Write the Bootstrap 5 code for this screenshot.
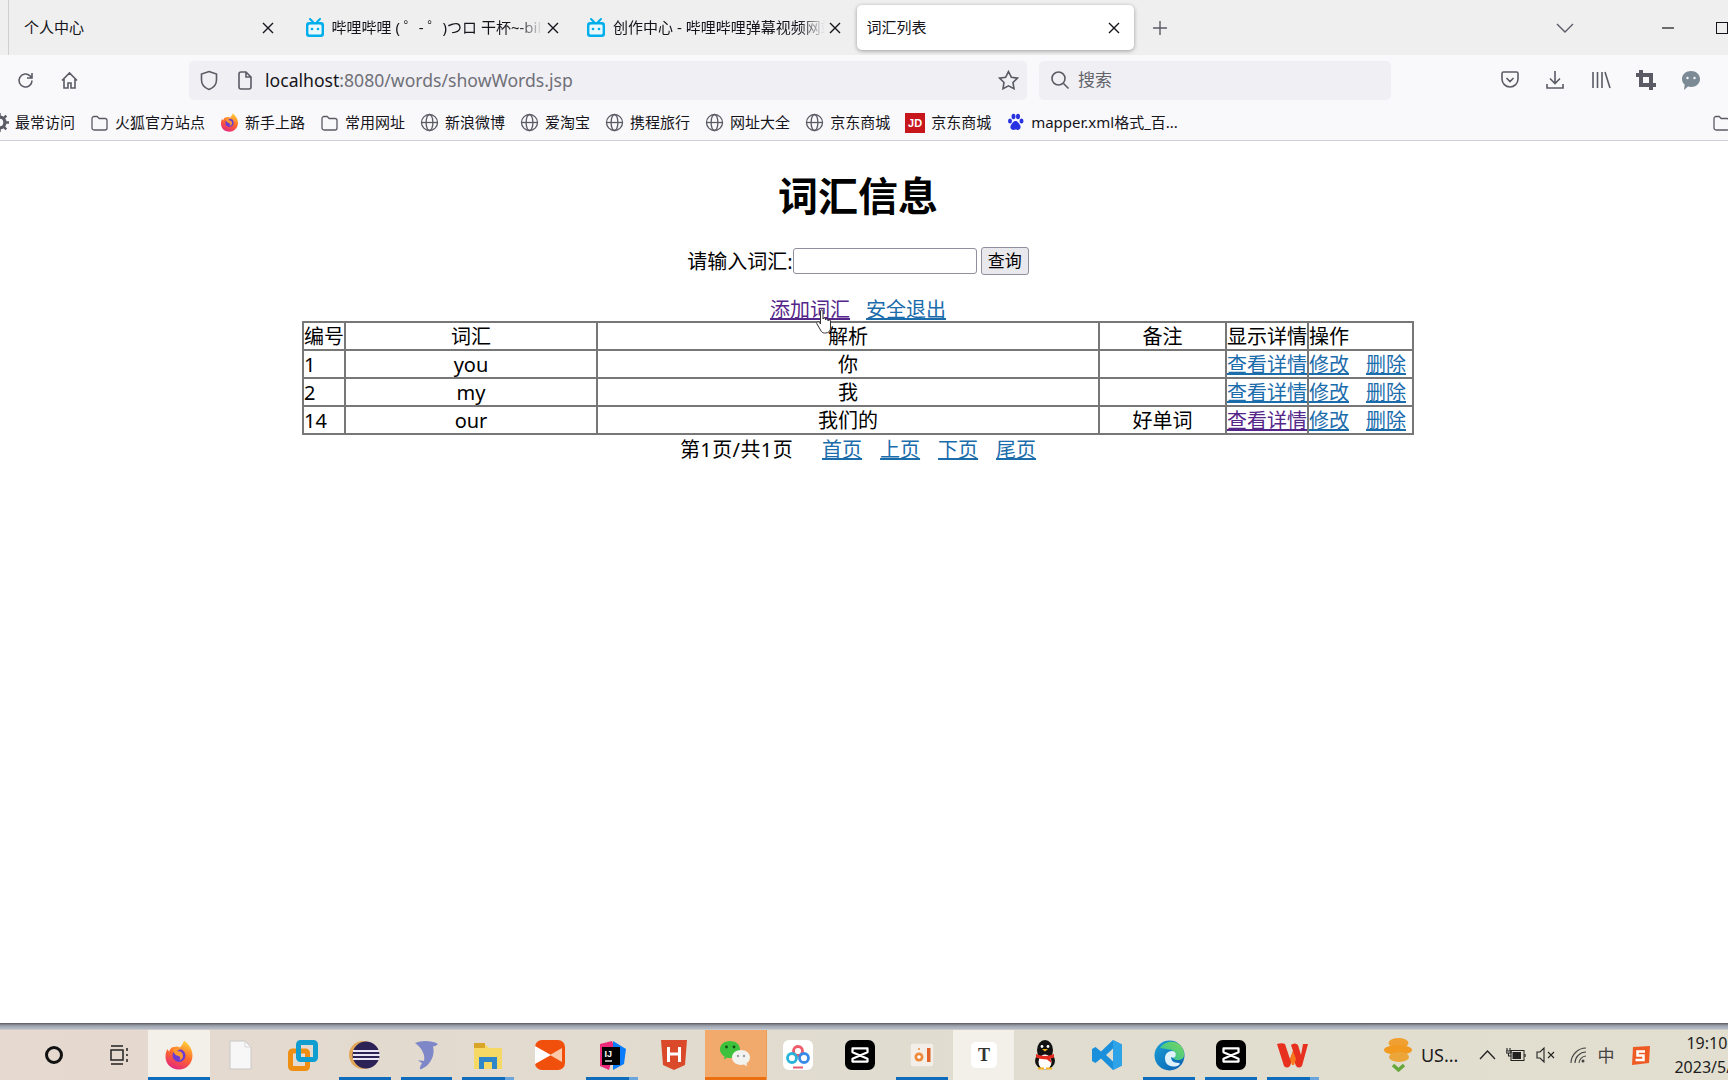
<!DOCTYPE html>
<html lang="zh-CN">
<head>
<meta charset="UTF-8">
<title>词汇列表</title>
<link href="https://cdn.jsdelivr.net/npm/bootstrap@5.3.0/dist/css/bootstrap.min.css" rel="stylesheet">
<style>
    html, body { height: 100%; }
    body { font-family: "Noto Sans", "Noto Sans CJK SC", sans-serif; color: #000; overflow: hidden; background: #fff; }
    .screen { height: 1080px; width: 1728px; overflow: hidden; }

    /* browser tabs */
    .tabstrip { height: 55px; background: #efeff0; padding-left: 8px; font-size: 15px; color: #15141a; }
    .tab-item { width: 281.5px; height: 45px; padding: 0 12px 0 15px; flex: none; }
    .tab-first { border-left: 1px solid #cfcfd4; height: 55px; }
    .tab-active { background: #fff; border-radius: 5px; box-shadow: 0 1px 4px rgba(0,0,0,.35); width: 277px; margin-left: 4px; padding-left: 10px; padding-right: 14px; }
    .tab-title { white-space: nowrap; overflow: hidden; flex: 1; min-width: 0; -webkit-mask-image: linear-gradient(to right, #000 88%, transparent); mask-image: linear-gradient(to right, #000 88%, transparent); }
    .tab-active .tab-title, .tab-first .tab-title { -webkit-mask-image: none; mask-image: none; }
    .tab-close { width: 12px; height: 12px; flex: none; }
    .tab-fav { width: 20px; height: 20px; flex: none; margin-right: 7px; }
    .strip-btn { flex: none; }
    .gap-plus { margin-left: 18px; }
    .gap-chevron { margin-left: 388px; }
    .gap-min { margin-left: 88px; }
    .gap-max { margin-left: 42px; }

    /* toolbar */
    .toolbar { height: 50px; background: #f9f9fb; position: relative; }
    .tool-svg { flex: none; fill: none; stroke: #5b5b66; stroke-width: 1.6; }
    .gap-reload { margin-left: 16px; }
    .gap-home { margin-left: 25px; }
    .urlbar { width: 838px; height: 39px; margin-left: 110px; background: #f0f0f4; border-radius: 5px; padding: 0 8px 0 10px; font-size: 17.6px; color: #15141a; flex: none; }
    .urlbar .dim { color: #6f6f78; }
    .url-doc { margin-left: 18px; }
    .url-text { margin-left: 13px; }
    .searchbar { width: 352px; height: 39px; margin-left: 12px; background: #f0f0f4; border-radius: 5px; padding-left: 11px; font-size: 17px; color: #63636b; flex: none; }
    .toolgroup { margin-left: 109px; gap: 25px; }
    .solid-ico { flex: none; }

    /* bookmarks */
    .bookmarks { height: 36px; background: #f9f9fb; border-bottom: 1px solid #cfcfd8; font-size: 15px; color: #15141a; white-space: nowrap; padding-left: 0; }
    .mark-row { gap: 15px; margin-left: -10px; }
    .mark-link { gap: 6px; flex: none; }
    .mark-ico { width: 19px; height: 19px; flex: none; }
    .jd-tile { width: 20px; height: 20px; background: #c8161d; color: #fff; font: bold 11px/20px "Liberation Sans", sans-serif; text-align: center; flex: none; }
    .folder-end { margin-right: -3px; }

    /* page */
    .word-page { height: 882px; width: 1716px; padding-top: 30px; font-size: 20px; position: relative; text-align: center; line-height: 27px; }
    .word-page h1 { font-size: 40px; font-weight: 700; margin: 0; line-height: 50px; }
    .search-line { margin-top: 25px; height: 30px; }
    .word-input { width: 184px; height: 26px; border: 1px solid #8f8f9d; border-radius: 3px; background: #fff; padding: 0 3px; }
    .word-btn { width: 48px; height: 28px; margin-left: 4px; border: 1px solid #8f8f9d; border-radius: 3px; background: #e9e9ed; font-size: 17px; line-height: 24px; padding: 0; color: #000; }
    .link-line { margin-top: 20px; height: 25px; line-height: 27px; }
    .word-page a { color: #1b6cab; text-decoration: underline; }
    .word-page a.seen { color: #55268a; }
    .word-table { width: 1110px; margin: 0 auto; border-collapse: collapse; table-layout: fixed; font-size: 20px; }
    .word-table td { border: 2px solid #777; padding: 2px 0 0; height: 28px; line-height: 24px; white-space: nowrap; overflow: hidden; }
    .word-table td.al { text-align: left; }
    .w-a { width: 42px; } .w-b { width: 252px; } .w-c { width: 502px; } .w-d { width: 127px; } .w-e { width: 82px; } .w-f { width: 105px; }
    .pager { line-height: 30px; height: 28px; gap: 18px; }
    .pager-info { letter-spacing: .4px; margin-right: 11px; }
    .mod-del { gap: 17px; }
    .hand-cursor { position: absolute; left: 815px; top: 168px; width: 21px; height: 26px; }

    /* taskbar */
    .taskbar { height: 57px; background: linear-gradient(to bottom, #55585c 0, #8d9198 2px, #a9b1bf 4px, #b4b9c2 6px, transparent 7px), linear-gradient(to right, #e6d9cf, #e0dccf 50%, #e2dfd0); padding-top: 7px; position: relative; }
    .task-slot { width: 61.9px; height: 50px; flex: none; position: relative; }
    .task-open::after { content: ""; position: absolute; left: 5px; right: 5px; bottom: 0; height: 3px; background: #0f6cbd; }
    .task-multi::after { background: linear-gradient(to right, #0f6cbd 82%, #6aa6db 82%); }
    .task-lit { background: #f3f0ea; }
    .task-lit.task-open::after { left: 0; right: 0; }
    .task-wechat { background: #f2a96c; border-right: 1px solid #ee9a52; }
    .task-wechat::after { content: ""; position: absolute; left: 0; right: 0; bottom: 0; height: 3px; background: #ea6f10; }
    .task-sys { width: 59px; height: 50px; flex: none; }
    .sys-first { margin-left: 24px; }
    .sys-second { margin-left: 6px; }
    .tray { margin-left: 60px; font-size: 18px; color: #1d1d1d; white-space: nowrap; height: 50px; }
    .tray-up { margin-left: 21px; }
    .tray-bat { margin-left: 10px; }
    .tray-spk { margin-left: 10px; }
    .tray-wifi { margin-left: 13px; }
    .tray-ime { margin-left: 10px; font-size: 17px; color: #444; font-family: "Noto Sans CJK SC", sans-serif; }
    .tray-sogou { margin-left: 16px; }
    .clock { font-size: 16px; line-height: 24px; text-align: left; margin-left: 23px; width: 80px; flex: none; }
    .clock-time { padding-left: 12px; }
</style>
</head>
<body>
<svg width="0" height="0" class="position-absolute">
    <symbol id="ico-x" viewBox="0 0 12 12"><path d="M1 1l10 10M11 1L1 11" stroke="#15141a" stroke-width="1.4" fill="none"/></symbol>
    <symbol id="ico-bili" viewBox="0 0 20 20"><path d="M5 1l3 3M15 1l-3 3" stroke="#00aeec" stroke-width="2" stroke-linecap="round"/><rect x="1" y="4" width="18" height="15" rx="3" fill="#00aeec"/><rect x="3.4" y="6.5" width="13.2" height="10" rx="1.5" fill="#e8f8fd"/><circle cx="7" cy="11" r="1.3" fill="#00aeec"/><circle cx="13" cy="11" r="1.3" fill="#00aeec"/></symbol>
    <symbol id="ico-folder" viewBox="0 0 19 19"><path d="M2 5.5a2 2 0 0 1 2-2h3.2l2 2H15a2 2 0 0 1 2 2V15a2 2 0 0 1-2 2H4a2 2 0 0 1-2-2z" fill="none" stroke="#5b5b66" stroke-width="1.3"/></symbol>
    <symbol id="ico-globe" viewBox="0 0 19 19"><g fill="none" stroke="#5b5b66" stroke-width="1.3"><circle cx="9.5" cy="9.5" r="8"/><ellipse cx="9.5" cy="9.5" rx="3.4" ry="8"/><path d="M1.5 9.5h16"/></g></symbol>
    <symbol id="ico-ff" viewBox="0 0 30 30">
        <defs><linearGradient id="ffg" x1="0.7" y1="0" x2="0.3" y2="1"><stop offset="0" stop-color="#ffd23a"/><stop offset=".5" stop-color="#ff6a2b"/><stop offset="1" stop-color="#e4257f"/></linearGradient></defs>
        <path d="M15 29.500C7 29.500 1.500 24 1.500 16.500c0-3 .8-5.500 2-7.500.3 1.200 1 2 1.800 2.500C6 8 8.500 6.500 10 7c2.500-1 4.500-.5 6 .5C18 5 19.500 3 20 .5c5 3.500 8.500 9 8.500 15 0 8-6 14-13.500 14z" fill="url(#ffg)"/>
        <circle cx="15" cy="15.500" r="6.500" fill="#6d3bd1"/>
        <path d="M9 10c3-2.500 6-2 7.500-.5-2 0-3 .8-3.300 2 1.800-.6 5.800.3 5.800 4.500 0 2-1.500 4-4 4.500 2-1.500 1.500-4-.5-4.500-2-.3-4-1-5.500-6z" fill="#ff9a2e"/>
    </symbol>
    <symbol id="ico-capcut" viewBox="0 0 32 32"><rect width="32" height="32" rx="7" fill="#000"/><path d="M8 9h16v4L8 20v3h16v-3L8 13z" fill="none" stroke="#fff" stroke-width="2.400" stroke-linejoin="round"/></symbol>
</svg>

<div class="screen d-flex flex-column">

    <!-- tabs -->
    <div class="tabstrip d-flex align-items-center">
        <div class="tab-item tab-first d-flex align-items-center"><span class="tab-title">个人中心</span><svg class="tab-close me-1"><use href="#ico-x"/></svg></div>
        <div class="tab-item d-flex align-items-center"><svg class="tab-fav"><use href="#ico-bili"/></svg><span class="tab-title">哔哩哔哩 ( ゜- ゜)つロ 干杯~-bilibili</span><svg class="tab-close ms-1"><use href="#ico-x"/></svg></div>
        <div class="tab-item d-flex align-items-center"><svg class="tab-fav"><use href="#ico-bili"/></svg><span class="tab-title">创作中心 - 哔哩哔哩弹幕视频网站</span><svg class="tab-close ms-1"><use href="#ico-x"/></svg></div>
        <div class="tab-item tab-active d-flex align-items-center"><span class="tab-title">词汇列表</span><svg class="tab-close"><use href="#ico-x"/></svg></div>
        <svg class="strip-btn gap-plus" width="16" height="16" viewBox="0 0 16 16"><path d="M8 1v14M1 8h14" stroke="#5b5b66" stroke-width="1.400"/></svg>
        <svg class="strip-btn gap-chevron" width="18" height="10" viewBox="0 0 18 10"><path d="M1 1l8 8 8-8" fill="none" stroke="#5b5b66" stroke-width="1.400"/></svg>
        <svg class="strip-btn gap-min" width="12" height="2" viewBox="0 0 12 2"><path d="M0 1h12" stroke="#15141a" stroke-width="1.200"/></svg>
        <svg class="strip-btn gap-max" width="12" height="12" viewBox="0 0 12 12"><rect x=".5" y=".5" width="11" height="11" fill="none" stroke="#15141a"/></svg>
    </div>

    <!-- toolbar -->
    <div class="toolbar d-flex align-items-center">
        <svg class="tool-svg gap-reload" width="19" height="19" viewBox="0 0 19 19"><path d="M16 9.500a6.500 6.500 0 1 1-2-4.700L16 7M16 2v5h-5"/></svg>
        <svg class="tool-svg gap-home" width="19" height="19" viewBox="0 0 19 19"><path d="M2 9.500L9.500 2 17 9.500M4 8v9h4v-5h3v5h4V8"/></svg>
        <div class="urlbar d-flex align-items-center">
            <svg class="tool-svg" width="20" height="21" viewBox="0 0 20 21"><path d="M10 1.500l7.500 2.500v6c0 5-3.500 8-7.500 9.500-4-1.500-7.500-4.500-7.500-9.500V4z"/></svg>
            <svg class="tool-svg url-doc" width="15" height="19" viewBox="0 0 15 19"><path d="M2 3a2 2 0 0 1 2-2h5l5 5v10a2 2 0 0 1-2 2H4a2 2 0 0 1-2-2zM9 1v5h5"/></svg>
            <span class="url-text flex-grow-1">localhost<span class="dim">:8080/words/showWords.jsp</span></span>
            <svg class="tool-svg" width="21" height="20" viewBox="0 0 21 20"><path d="M10.500 1.500l2.800 5.700 6.200.9-4.500 4.400 1 6.200-5.500-2.900-5.500 2.900 1-6.200L1.500 8.100l6.200-.9z"/></svg>
        </div>
        <div class="searchbar d-flex align-items-center">
            <svg class="tool-svg" width="20" height="20" viewBox="0 0 20 20"><circle cx="8.500" cy="8.500" r="6.500"/><path d="M13.500 13.500l5 5"/></svg>
            <span class="ms-2">搜索</span>
        </div>
        <div class="toolgroup d-flex align-items-center">
            <svg class="tool-svg" width="20" height="20" viewBox="0 0 20 20"><path d="M2 3.500a1.500 1.500 0 0 1 1.500-1.500h13A1.500 1.500 0 0 1 18 3.500V9a8 8 0 0 1-16 0zM6.500 8l3.500 3.500L13.500 8"/></svg>
            <svg class="tool-svg" width="20" height="20" viewBox="0 0 20 20"><path d="M10 1v12M5 8.500l5 5 5-5M2 14v4h16v-4"/></svg>
            <svg class="tool-svg" width="21" height="20" viewBox="0 0 21 20"><path d="M3 2v16M7.500 2v16M12 2v16M15 2l5 16"/></svg>
            <svg class="solid-ico" width="20" height="20" viewBox="0 0 20 20"><path d="M5 0v15h15M0 5h15v15" fill="none" stroke="#5b5b66" stroke-width="4"/></svg>
            <svg class="solid-ico" width="20" height="21" viewBox="0 0 20 21"><path d="M10 1c5 0 9 3.500 9 8s-4 8-9 8c-1 0-2 0-3-.4L3 20l.7-5.300C2 13.300 1 11.300 1 9c0-4.500 4-8 9-8z" fill="#7c8a96"/><circle cx="6.500" cy="8" r="1.200" fill="#f9f9fb"/><circle cx="13.500" cy="8" r="1.200" fill="#f9f9fb"/></svg>
        </div>
    </div>

    <!-- bookmarks -->
    <div class="bookmarks d-flex align-items-center justify-content-between">
        <div class="mark-row d-flex align-items-center">
            <span class="mark-link d-flex align-items-center"><svg class="mark-ico" viewBox="0 0 14 14"><circle cx="7" cy="7" r="4" fill="none" stroke="#5b5b66" stroke-width="2.400"/><path d="M7 0v3M7 11v3M0 7h3M11 7h3M2 2l2 2M10 10l2 2M12 2l-2 2M4 10l-2 2" stroke="#5b5b66" stroke-width="1.800"/></svg>最常访问</span>
            <span class="mark-link d-flex align-items-center"><svg class="mark-ico"><use href="#ico-folder"/></svg>火狐官方站点</span>
            <span class="mark-link d-flex align-items-center"><svg class="mark-ico"><use href="#ico-ff"/></svg>新手上路</span>
            <span class="mark-link d-flex align-items-center"><svg class="mark-ico"><use href="#ico-folder"/></svg>常用网址</span>
            <span class="mark-link d-flex align-items-center"><svg class="mark-ico"><use href="#ico-globe"/></svg>新浪微博</span>
            <span class="mark-link d-flex align-items-center"><svg class="mark-ico"><use href="#ico-globe"/></svg>爱淘宝</span>
            <span class="mark-link d-flex align-items-center"><svg class="mark-ico"><use href="#ico-globe"/></svg>携程旅行</span>
            <span class="mark-link d-flex align-items-center"><svg class="mark-ico"><use href="#ico-globe"/></svg>网址大全</span>
            <span class="mark-link d-flex align-items-center"><svg class="mark-ico"><use href="#ico-globe"/></svg>京东商城</span>
            <span class="mark-link d-flex align-items-center"><span class="jd-tile">JD</span>京东商城</span>
            <span class="mark-link d-flex align-items-center"><svg class="mark-ico" viewBox="0 0 19 19"><g fill="#2932e1"><ellipse cx="4" cy="8" rx="2" ry="2.600"/><ellipse cx="7.500" cy="3.500" rx="2" ry="2.800"/><ellipse cx="12" cy="3.500" rx="2" ry="2.800"/><ellipse cx="15.500" cy="8" rx="2" ry="2.600"/><path d="M9.500 8c-2 0-3 2-4.500 4-1.500 2.500 0 5 2.500 5 1 0 1.500-.4 2-.4s1 .4 2 .4c2.500 0 4-2.500 2.500-5C12.500 10 11.500 8 9.500 8z"/></g></svg>mapper.xml格式_百...</span>
        </div>
        <svg class="mark-ico folder-end"><use href="#ico-folder"/></svg>
    </div>

    <!-- page -->
    <div class="word-page">
        <h1>词汇信息</h1>
        <form class="search-line d-flex align-items-center justify-content-center" onsubmit="return false">
            <label for="wordInput">请输入词汇:</label>
            <input id="wordInput" class="word-input" type="text">
            <button class="word-btn" type="submit">查询</button>
        </form>
        <div class="link-line"><a class="seen" href="#">添加词汇</a><a class="ms-3" href="#">安全退出</a></div>
        <table class="word-table">
            <colgroup><col class="w-a"><col class="w-b"><col class="w-c"><col class="w-d"><col class="w-e"><col class="w-f"></colgroup>
            <tr><td class="al">编号</td><td>词汇</td><td>解析</td><td>备注</td><td class="al">显示详情</td><td class="al">操作</td></tr>
            <tr><td class="al">1</td><td>you</td><td>你</td><td></td><td class="al"><a href="#">查看详情</a></td><td class="al"><div class="d-flex mod-del"><a href="#">修改</a><a href="#">删除</a></div></td></tr>
            <tr><td class="al">2</td><td>my</td><td>我</td><td></td><td class="al"><a href="#">查看详情</a></td><td class="al"><div class="d-flex mod-del"><a href="#">修改</a><a href="#">删除</a></div></td></tr>
            <tr><td class="al">14</td><td>our</td><td>我们的</td><td>好单词</td><td class="al"><a class="seen" href="#">查看详情</a></td><td class="al"><div class="d-flex mod-del"><a href="#">修改</a><a href="#">删除</a></div></td></tr>
        </table>
        <div class="pager d-flex justify-content-center">
            <span class="pager-info">第1页/共1页</span>
            <a href="#">首页</a>
            <a href="#">上页</a>
            <a href="#">下页</a>
            <a href="#">尾页</a>
        </div>
        <svg class="hand-cursor" viewBox="0 0 20 26"><path d="M5 2c0-1.500 2.500-1.500 2.500 0v8c0-1.500 2.500-1.500 2.500 0v1c0-1.500 2.500-1.500 2.500 0v1c0-1.500 2.500-1.500 2.500 0v7c0 3-2 5-5 5H9c-2 0-3-1-4-3l-3.500-6c-1-2 1-3 2.500-1.500L5 15z" fill="#fff" stroke="#333" stroke-width="1"/></svg>
    </div>

    <!-- taskbar -->
    <div class="taskbar d-flex">
        <div class="task-sys sys-first d-flex align-items-center justify-content-center"><svg width="20" height="20" viewBox="0 0 20 20"><circle cx="10" cy="10" r="7.500" fill="none" stroke="#111" stroke-width="3"/></svg></div>
        <div class="task-sys sys-second d-flex align-items-center justify-content-center"><svg width="22" height="20" viewBox="0 0 22 20"><path d="M3 1h12M3 19h12M3 5h12v10H3zM19 3v3M19 9v2M19 14v3" fill="none" stroke="#222" stroke-width="1.500"/></svg></div>
        <div class="task-slot task-lit task-open d-flex align-items-center justify-content-center"><svg width="30" height="30"><use href="#ico-ff"/></svg></div>
        <div class="task-slot d-flex align-items-center justify-content-center"><svg width="23" height="30" viewBox="0 0 23 30"><path d="M1 1h15l6 6v22H1z" fill="#f7f7f7" stroke="#c8c8c8"/><path d="M16 1v6h6" fill="none" stroke="#d8d8d8"/></svg></div>
        <div class="task-slot d-flex align-items-center justify-content-center"><svg width="30" height="31" viewBox="0 0 30 31"><rect x="2.500" y="11" width="17" height="17.500" rx="2" fill="none" stroke="#ee8f14" stroke-width="5"/><rect x="10.500" y="2.500" width="17" height="17" rx="2" fill="none" stroke="#0f9ecf" stroke-width="5"/></svg></div>
        <div class="task-slot task-open d-flex align-items-center justify-content-center"><svg width="31" height="28" viewBox="0 0 31 28"><circle cx="14" cy="14" r="14" fill="#e2a85a"/><circle cx="17" cy="14" r="13.500" fill="#2c2255"/><path d="M4 10h26M4 14h27M4 18h26" stroke="#e9e7f5" stroke-width="2"/></svg></div>
        <div class="task-slot task-open d-flex align-items-center justify-content-center"><svg width="25" height="30" viewBox="0 0 25 30"><path d="M1 3c6-2.500 16-3 23 1-1.500 1.500-3 2.500-5 2.500 2 7-1 15-7 20-2 1-4 2.500-6 3 0-2 0-4 2-6-1-1.500-3-2-4-3 2 0 4 0 6 .5 1.500-6-2-13-9-18z" fill="#7e88c8"/></svg></div>
        <div class="task-slot task-open task-multi d-flex align-items-center justify-content-center"><svg width="28" height="27" viewBox="0 0 28 27"><path d="M0 3h12l3 3h13v21H0z" fill="#f6d964"/><path d="M0 1h11v5H0z" fill="#d9a528"/><path d="M5 27V15h18v12h-5v-7h-8v7z" fill="#2f86c9"/></svg></div>
        <div class="task-slot d-flex align-items-center justify-content-center"><svg width="30" height="30" viewBox="0 0 30 30"><rect width="30" height="30" rx="7" fill="#f1500c"/><path d="M0 6l16 9-16 9z" fill="#fff"/><path d="M27 8v14l-12-7z" fill="#fbc9ac"/></svg></div>
        <div class="task-slot task-open task-multi d-flex align-items-center justify-content-center"><svg width="29" height="30" viewBox="0 0 29 30"><path d="M2 4l12-3 3 8-6 21-9-4z" fill="#ee2a7b"/><path d="M15 1l13 8-2 15-11 6z" fill="#087cfa"/><rect x="4" y="7" width="18" height="18" fill="#000"/><text x="6.500" y="16.500" fill="#fff" font-family="Liberation Sans, sans-serif" font-size="9" font-weight="700">IJ</text><path d="M7 21h7" stroke="#fff" stroke-width="1.300"/></svg></div>
        <div class="task-slot d-flex align-items-center justify-content-center"><svg width="26" height="30" viewBox="0 0 26 30"><path d="M0 0h26l-2 25-11 5-11-5z" fill="#d9492a"/><path d="M7.500 7v15M18.500 7v15M7.500 14h11" stroke="#fff" stroke-width="3"/></svg></div>
        <div class="task-slot task-wechat d-flex align-items-center justify-content-center"><svg width="30" height="28" viewBox="0 0 30 28"><path d="M10 0c6 0 10 3.500 10 8.500S16 17 10 17c-1 0-2 0-3-.3L4 18.500l.6-3C2 14 0 11.500 0 8.500 0 3.500 4 0 10 0z" fill="#3ec23e"/><path d="M21 9c5 0 9 3 9 7.500 0 2.500-1.500 4.500-3.500 6l.5 3-3-2c-1 .3-2 .4-3 .4-5 0-9-3-9-7.400S16 9 21 9z" fill="#f2f2ef"/><circle cx="6.500" cy="6" r="1.400" fill="#12500f"/><circle cx="14" cy="6" r="1.400" fill="#12500f"/><circle cx="18" cy="15" r="1.200" fill="#9a9aa6"/><circle cx="24" cy="15" r="1.200" fill="#9a9aa6"/></svg></div>
        <div class="task-slot d-flex align-items-center justify-content-center"><svg width="30" height="30" viewBox="0 0 30 30"><rect width="30" height="30" rx="6" fill="#fff"/><g fill="none" stroke-width="2.800"><circle cx="15" cy="11" r="4.500" stroke="#ef5a6a"/><circle cx="9" cy="18" r="4.500" stroke="#28b4d8"/><circle cx="21" cy="18" r="4.500" stroke="#3a8ae8"/></g><path d="M10 27.500h10" stroke="#ea5a6a" stroke-width="2"/></svg></div>
        <div class="task-slot d-flex align-items-center justify-content-center"><svg width="30" height="30"><use href="#ico-capcut"/></svg></div>
        <div class="task-slot task-open d-flex align-items-center justify-content-center"><svg width="24" height="24" viewBox="0 0 24 24"><rect width="24" height="24" rx="2" fill="#f3efe8" stroke="#d6d0c6"/><circle cx="9" cy="14" r="4.500" fill="#ef8a3a"/><circle cx="9" cy="14" r="1.800" fill="#fff"/><circle cx="9" cy="6" r="1" fill="#ef8a3a"/><rect x="17" y="5" width="3.500" height="14" fill="#e2632a"/></svg></div>
        <div class="task-slot task-lit d-flex align-items-center justify-content-center"><svg width="26" height="26" viewBox="0 0 26 26"><rect width="26" height="26" rx="5" fill="#fff"/><text x="13" y="19" text-anchor="middle" fill="#333" font-family="Liberation Serif, serif" font-size="18" font-weight="700">T</text></svg></div>
        <div class="task-slot d-flex align-items-center justify-content-center"><svg width="24" height="30" viewBox="0 0 24 30"><ellipse cx="12" cy="10" rx="8" ry="10" fill="#111"/><ellipse cx="12" cy="21" rx="10" ry="8.500" fill="#111"/><ellipse cx="12" cy="22" rx="6.500" ry="7.500" fill="#fff"/><path d="M3 14c6 2.500 12 2.500 18 0v3.500l-3.500 1 1 4.500-4.500-3.500C10 19.500 6 18.500 3 17.500z" fill="#e22b1e"/><path d="M9 9h6l-3 2.500z" fill="#f5b11c"/><circle cx="9" cy="6.500" r="1.400" fill="#fff"/><circle cx="15" cy="6.500" r="1.400" fill="#fff"/><path d="M5 28.500h6M13 28.500h6" stroke="#f5b11c" stroke-width="2"/></svg></div>
        <div class="task-slot d-flex align-items-center justify-content-center"><svg width="30" height="30" viewBox="0 0 30 30"><path d="M21 0l9 4.500v21L21 30 9 18.500 3.500 23 0 21V9l3.500-2L9 11.500z" fill="#1a8fdc"/><path d="M21 0l9 4.500v21L21 30z" fill="#2ea3e8"/><path d="M21 8.500L14 15l7 6.500z" fill="#e0dccf"/></svg></div>
        <div class="task-slot task-open d-flex align-items-center justify-content-center"><svg width="31" height="31" viewBox="0 0 31 31"><defs><linearGradient id="edg" x1="0" y1="0" x2="1" y2="1"><stop offset="0" stop-color="#1a9fd8"/><stop offset="1" stop-color="#0b5fb0"/></linearGradient><linearGradient id="edh" x1="0" y1="1" x2="1" y2="0"><stop offset="0" stop-color="#2bbfa0"/><stop offset="1" stop-color="#7bd85a"/></linearGradient></defs><circle cx="15.500" cy="15.500" r="15" fill="url(#edg)"/><path d="M6 8C10 1 21-1 27 6c4 5 4 11 1 13-3 2-8 1-9-1 3-1 3-5 0-7-3-2-9-2-13-3z" fill="url(#edh)"/><path d="M11 18c0-4 3-7 7-7 3 0 5 3 3 6-1 1-3 1-4 0 0 3 2 6 8 6 1 0 1 1 0 2-3 2-7 2-10 .5-3-1.500-4-4-4-7.500z" fill="#e0f2fb"/></svg></div>
        <div class="task-slot task-open d-flex align-items-center justify-content-center"><svg width="30" height="30"><use href="#ico-capcut"/></svg></div>
        <div class="task-slot task-open task-multi d-flex align-items-center justify-content-center"><svg width="31" height="26" viewBox="0 0 31 26"><path d="M0 2c3-1 6-1 8 0l5 15 3-8-2-6c3-2 5-2 7 0l3 10 2-11h5l-6 22c-2 2-4 2-6 0l-3-8-3 8c-2 2-4 2-6 0z" fill="#e8301e"/><path d="M13 17l3-8 3 8-2 6h-2z" fill="#f77a1c"/></svg></div>
        <div class="tray d-flex align-items-center">
            <svg width="29" height="38" viewBox="0 0 29 38"><ellipse cx="14.500" cy="7" rx="10" ry="5" fill="#f0a030"/><ellipse cx="14" cy="14" rx="14" ry="5" fill="#f29a20"/><ellipse cx="15" cy="21" rx="10" ry="5" fill="#eca538"/><path d="M9 29l5.500 5 5.500-5" fill="none" stroke="#66a83a" stroke-width="3.500"/></svg>
            <span class="ms-2">US...</span>
            <svg class="tray-up" width="17" height="10" viewBox="0 0 17 10"><path d="M1 9l7.500-8L16 9" fill="none" stroke="#222" stroke-width="1.300"/></svg>
            <svg class="tray-bat" width="20" height="14" viewBox="0 0 20 14"><path d="M1 0v3M4 0v3M0 3h5v2H0zM2.500 5v3h3" fill="none" stroke="#222" stroke-width="1.100"/><rect x="5" y="2.500" width="13" height="10" fill="none" stroke="#222"/><rect x="6.500" y="4" width="8.500" height="7" fill="#222"/><path d="M19 6v3" stroke="#222" stroke-width="1.200"/></svg>
            <svg class="tray-spk" width="20" height="18" viewBox="0 0 20 18"><path d="M1 6h3l4-4v14l-4-4H1zM12 6l6 6M18 6l-6 6" fill="none" stroke="#222" stroke-width="1.100"/></svg>
            <svg class="tray-wifi" width="18" height="18" viewBox="0 0 18 18"><path d="M2 17C2 9 9 2 17 2M6 17c0-6 5-11 11-11M10 17c0-3 3-7 7-7" fill="none" stroke="#444" stroke-width="1.100"/><circle cx="14" cy="15" r="1.500" fill="#444"/></svg>
            <span class="tray-ime">中</span>
            <svg class="tray-sogou" width="21" height="21" viewBox="0 0 21 21"><path d="M3 2l17-1-1 17-17 2z" fill="#ee5a24"/><path d="M15 6.500H7.500V10.500h6v4.500H5.500" fill="none" stroke="#fff" stroke-width="2.500"/></svg>
            <div class="clock"><div class="clock-time">19:10</div><div>2023/5/</div></div>
        </div>
    </div>
</div>

<script src="https://cdn.jsdelivr.net/npm/bootstrap@5.3.0/dist/js/bootstrap.bundle.min.js"></script>
</body>
</html>
